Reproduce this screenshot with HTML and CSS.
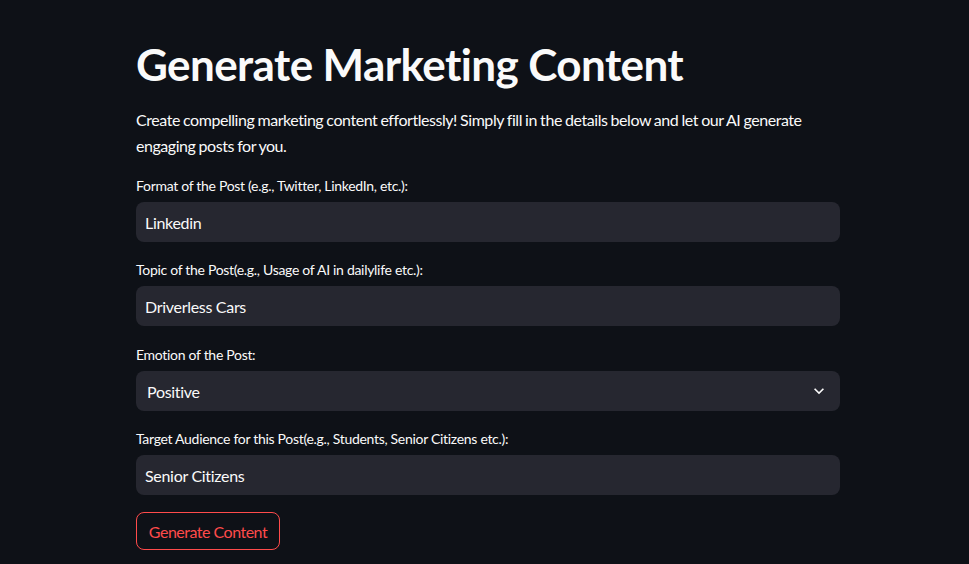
FILE: index.html
```html
<!DOCTYPE html>
<html lang="en">
<head>
<meta charset="utf-8">
<title>Generate Marketing Content</title>
<link rel="stylesheet" href="styles.css">
</head>
<body>
<main class="main">
  <div class="block">
    <h1 class="title">Generate Marketing Content</h1>
    <p class="intro">Create compelling marketing content effortlessly! Simply fill in the details below and let our AI generate engaging posts for you.</p>

    <div class="field">
      <label class="label">Format of the Post (e.g., Twitter, LinkedIn, etc.):</label>
      <div class="input">Linkedin</div>
    </div>

    <div class="field">
      <label class="label">Topic of the Post(e.g., Usage of AI in dailylife etc.):</label>
      <div class="input">Driverless Cars</div>
    </div>

    <div class="field field-shift">
      <label class="label">Emotion of the Post:</label>
      <div class="input select">
        <span class="select-value">Positive</span>
        <svg class="chev" viewBox="0 0 24 24" width="20" height="20"><path d="M7.41 8.59L12 13.17l4.59-4.58L18 10l-6 6-6-6 1.41-1.41z" fill="#fafafa"/></svg>
      </div>
    </div>

    <div class="field">
      <label class="label">Target Audience for this Post(e.g., Students, Senior Citizens etc.):</label>
      <div class="input">Senior Citizens</div>
    </div>

    <div class="actions">
      <button class="btn">Generate Content</button>
    </div>
  </div>
</main>
</body>
</html>
```

FILE: styles.css
```css
* { box-sizing: border-box; }
html, body {
  margin: 0;
  padding: 0;
  background: #0e1117;
  color: #fafafa;
  font-family: Lato, "Noto Sans", sans-serif;
  height: 100%;
}
.main {
  display: flex;
  padding: 38px 0 0 136px;
}
.block {
  width: 704px;
  display: flex;
  flex-direction: column;
  gap: 16px;
}
.title {
  margin: 0;
  font-size: 44px;
  line-height: 53px;
  font-weight: 700;
  letter-spacing: -0.6px;
  color: #fafafa;
}
.intro {
  margin: 0;
  font-size: 16px;
  line-height: 25.6px;
  letter-spacing: -0.45px;
  word-spacing: -0.5px;
}
.field {
  display: flex;
  flex-direction: column;
}
.field-shift { margin-top: 1px; }
.label {
  min-height: 24px;
  margin-bottom: 4px;
  font-size: 14px;
  line-height: 24px;
  letter-spacing: -0.3px;
  display: flex;
  align-items: center;
}
.input {
  height: 40px;
  background: #262730;
  border-radius: 8px;
  padding: 0 9px;
  display: flex;
  align-items: center;
  font-size: 16px;
  letter-spacing: -0.3px;
}
.select {
  padding: 0 11px;
  justify-content: space-between;
}
.chev { display: block; margin-right: 0; }
.actions { display: flex; margin-top: 1px; }
.btn {
  font-family: inherit;
  font-size: 16px;
  letter-spacing: -0.5px;
  white-space: nowrap;
  color: #ff4b4b;
  background: transparent;
  border: 1px solid #ff4b4b;
  border-radius: 8px;
  height: 38px;
  width: 144px;
  padding: 0;
}
```
